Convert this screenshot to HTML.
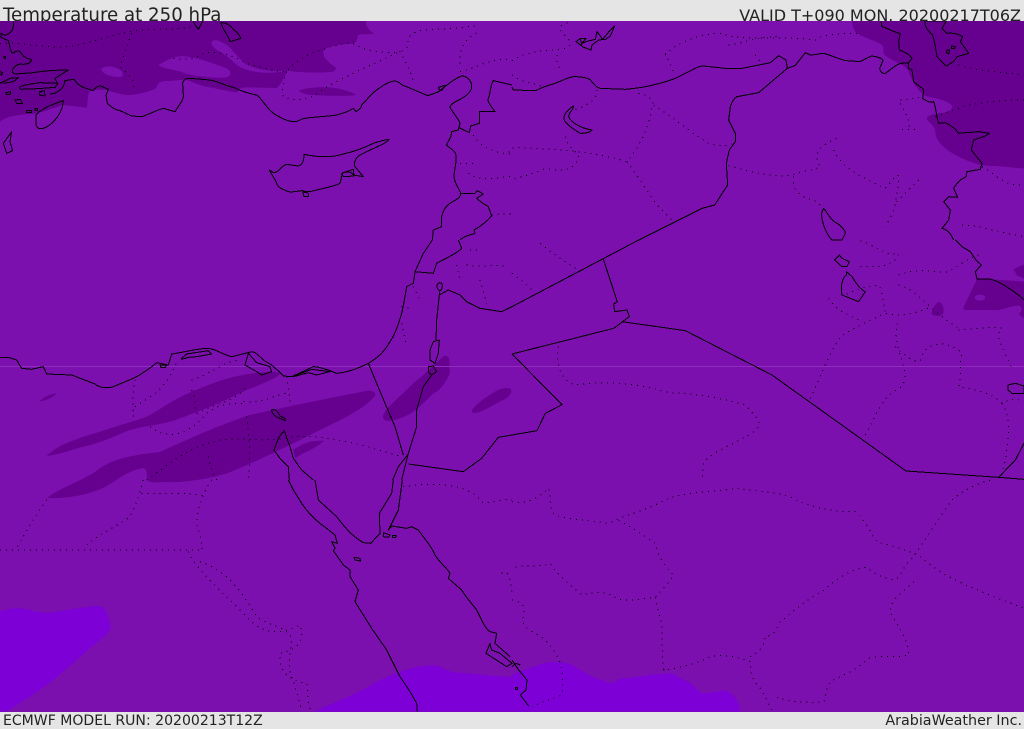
<!DOCTYPE html>
<html>
<head>
<meta charset="utf-8">
<title>Temperature at 250 hPa</title>
<style>
html,body{margin:0;padding:0;width:1024px;height:729px;overflow:hidden;background:#e5e5e5}
.t{position:absolute;font-family:"DejaVu Sans",sans-serif;color:#222;white-space:nowrap;line-height:1}
svg{position:absolute;left:0;top:21px}
.c path{fill:none;stroke:#000;stroke-width:1;vector-effect:non-scaling-stroke;stroke-linejoin:round;shape-rendering:crispEdges}
.d path{fill:none;stroke:#000;stroke-width:1;stroke-dasharray:1 5;vector-effect:non-scaling-stroke;shape-rendering:crispEdges}
</style>
</head>
<body>
<div class="t" style="left:3px;top:7px;font-size:18.2px">Temperature at 250 hPa</div>
<div class="t" style="right:3px;top:8px;font-size:16px">VALID T+090 MON. 20200217T06Z</div>
<div class="t" style="left:3px;top:714px;font-size:14.05px">ECMWF MODEL RUN: 20200213T12Z</div>
<div class="t" style="right:2px;top:714px;font-size:14.3px">ArabiaWeather Inc.</div>
<svg width="1024" height="691" viewBox="0 21 1024 691">
<rect x="0" y="21" width="1024" height="691" fill="#7b10ae"/>

<!-- dark and bright fills -->
<g fill="#65008f">
<g transform="scale(.33333)">
<path d="M0,63V365C20,350 40,345 110,340C150,330 170,320 190,315L260,323C265,300 262,285 268,275C290,268 305,268 320,270C350,280 370,285 390,285C430,280 465,270 470,262C472,250 480,243 500,243C520,243 545,238 560,240C590,250 605,258 620,260L710,278C715,270 720,262 735,262L830,264C845,250 855,230 862,212C900,218 960,220 1000,215L1010,205C990,190 968,175 970,155C975,140 1000,135 1060,130C1075,125 1070,110 1075,105C1090,100 1110,105 1122,100C1105,90 1095,75 1098,63Z"/>
</g>
<g transform="translate(512,0) scale(.33333)">
<path d="M1020,63C1022,80 1025,90 1035,100C1060,115 1100,125 1110,135C1118,145 1112,155 1115,160C1135,185 1180,190 1190,215C1200,240 1210,265 1240,288C1270,295 1310,300 1322,320C1318,335 1295,340 1280,340C1260,342 1240,350 1245,358C1255,372 1270,380 1270,395C1270,425 1300,450 1340,470C1370,485 1405,498 1440,498C1480,498 1510,505 1536,505V63Z"/>
</g>
<g transform="translate(512,240) scale(.33333)">
<path d="M1395,118H1440L1536,125V240L1505,232L1480,212L1440,210H1360L1353,205Z"/>
<path d="M1505,88C1520,80 1530,75 1536,75V115L1515,107Z"/>
<path d="M1258,222C1262,205 1272,185 1284,186C1296,195 1298,215 1290,225C1280,230 1265,228 1258,222Z"/>
</g>
<g transform="translate(0,240) scale(.33333)">
<path d="M140,648C170,620 200,605 300,575C360,555 400,545 440,530C480,510 520,475 600,445C650,425 700,405 780,398C810,395 830,395 842,400C830,415 790,430 740,450C680,480 620,505 540,535C490,555 440,555 390,570C340,590 300,610 250,620C200,635 170,645 140,648Z"/>
<path d="M118,484C130,472 150,462 170,460C160,470 140,482 118,484Z"/>
<path d="M880,628C900,620 915,605 945,603L972,602C960,615 930,632 905,642L885,655Z"/>
<path d="M1150,525C1160,500 1190,480 1240,430C1280,400 1310,365 1330,350C1340,345 1348,350 1348,365L1350,400C1340,420 1325,450 1300,460C1280,480 1260,500 1240,515C1210,535 1175,545 1160,542C1150,540 1148,532 1150,525Z"/>
<path d="M1415,512C1425,495 1460,470 1480,458C1500,445 1520,440 1532,447C1540,455 1525,475 1505,482C1480,495 1450,515 1425,519C1418,519 1415,517 1415,512Z"/>
</g>
<path d="M47,498C60,488 75,484 95,472C110,460 125,456 160,452C190,438 220,425 250,415C290,406 330,398 366,391C374,390 376,393 375,396C365,408 345,418 320,430C290,445 260,460 228,473C205,480 180,483 163,482C150,483 147,482 147,478C147,472 146,468 143,468C130,470 120,478 105,487C90,494 70,499 47,498Z"/>
</g>
<g fill="#7b10ae">
<g transform="scale(.33333)">
<path d="M303,208C315,195 340,197 358,208C372,218 372,228 362,231C340,232 310,225 303,208Z"/>
<path d="M475,195C500,182 520,168 550,168C590,172 640,190 680,205C695,215 695,225 680,232C650,236 600,230 560,222C530,208 490,208 475,195Z"/>
<path d="M635,125C645,115 660,122 680,135C700,150 710,170 735,190C760,208 810,215 862,212C850,215 820,220 790,218C750,215 720,205 705,190C690,175 670,160 650,150C640,142 632,132 635,125Z"/>
</g>
<g transform="translate(512,240) scale(.33333)">
<ellipse cx="1404" cy="173" rx="16" ry="9"/>
<path d="M1440,215C1470,210 1495,198 1520,197C1532,200 1532,212 1520,222L1536,235V250L1500,230C1480,225 1460,222 1440,215Z"/>
</g>
</g>
<g transform="scale(.33333)" fill="#65008f">
<path d="M897,272C920,262 960,260 1000,263C1030,268 1060,278 1068,285C1050,288 1000,288 960,286C930,286 905,282 897,272Z"/>
</g>
<g fill="#7d00d6">
<g transform="translate(0,480) scale(.33333)">
<path d="M0,395C20,388 40,384 65,385C90,388 110,398 140,398C180,395 240,382 290,378C310,378 318,388 320,400C325,415 333,428 332,445C325,462 310,472 290,488C250,520 200,570 140,615C100,645 50,675 20,695H0Z"/>
<path d="M945,695C990,670 1060,650 1125,608C1160,590 1190,580 1210,572C1240,562 1280,555 1310,556C1330,565 1345,575 1370,577C1420,580 1490,590 1536,590V695Z"/>
</g>
<g transform="translate(512,480) scale(.33333)">
<path d="M0,583C40,570 80,552 110,547C140,545 170,548 190,560C215,575 235,590 260,597C280,603 295,612 305,608C315,600 320,595 335,595C375,592 430,580 475,580C500,585 505,598 525,603C545,612 555,635 575,640C600,640 620,630 640,632C665,640 685,665 683,695H0Z"/>
</g>
</g>
<rect x="0" y="366" width="1024" height="1" fill="#8e2cbc"/>

<!-- dotted internal borders -->
<g class="d">
<g transform="scale(.33333)">
<path d="M0,130C60,125 120,145 200,140C280,130 340,100 420,90C470,85 510,92 580,80"/>
<path d="M395,100C380,140 370,170 360,200C385,225 410,240 400,275"/>
<path d="M520,175C560,180 590,175 610,160C640,150 700,165 740,190C790,205 830,215 860,215C890,175 940,150 1060,125"/>
<path d="M860,215C850,240 845,270 850,290C880,305 920,300 945,285C990,250 1080,210 1200,155C1250,140 1195,110 1260,92C1310,85 1350,90 1440,75"/>
<path d="M1060,130C1100,160 1180,160 1200,155C1220,190 1240,230 1240,250"/>
<path d="M1380,190C1375,150 1395,110 1440,95"/>
<path d="M1380,215C1420,210 1470,170 1536,180"/>
<path d="M1420,405C1440,440 1480,460 1536,462"/>
<path d="M1405,520C1440,545 1480,535 1536,528"/>
<path d="M1475,645C1500,640 1520,645 1536,640"/>
<path d="M1380,490H1420"/>
</g>
<g transform="translate(512,0) scale(.33333)">
<path d="M0,182C40,155 100,150 150,148C230,125 80,85 180,65"/>
<path d="M135,165C130,190 145,205 150,215"/>
<path d="M0,225C30,250 60,245 90,260"/>
<path d="M460,165C490,130 560,100 630,100C680,125 800,105 910,120C930,100 1000,100 1040,100"/>
<path d="M460,160C470,180 480,210 490,225"/>
<path d="M650,135C700,130 720,110 800,110"/>
<path d="M730,165L745,185"/>
<path d="M255,270C260,300 210,325 185,330"/>
<path d="M380,280C410,285 430,300 420,320C410,380 390,430 345,485C260,460 180,450 60,445C0,440 -10,440 -10,470"/>
<path d="M425,315C480,350 540,400 590,430C620,440 650,438 665,430"/>
<path d="M160,410C160,430 185,450 200,465C195,500 170,520 100,505C60,525 20,530 0,540"/>
<path d="M345,485C380,530 400,570 440,620L480,660"/>
<path d="M650,497C720,515 780,535 840,525C880,510 910,510 925,500C905,470 910,440 975,415"/>
<path d="M965,450C990,510 1070,540 1120,565C1160,520 1170,490 1150,610C1145,640 1130,660 1120,680"/>
<path d="M845,530C840,570 860,590 905,600L930,620"/>
<path d="M1220,540C1190,570 1170,590 1150,610"/>
<path d="M1165,300C1190,298 1220,295 1230,290M1165,310C1180,340 1195,360 1190,385M1170,388H1220"/>
<path d="M1270,350C1350,320 1400,300 1536,300"/>
<path d="M1340,195C1400,215 1470,215 1536,225"/>
<path d="M1410,500C1460,530 1480,560 1536,555"/>
<path d="M1350,675C1400,675 1470,700 1536,710"/>
</g>
<g transform="translate(0,240) scale(.33333)">
<path d="M400,530C400,490 395,440 410,410"/>
<path d="M405,500C450,470 500,450 530,365"/>
<path d="M575,450C590,480 585,510 590,520"/>
<path d="M575,420C640,400 690,350 720,365"/>
<path d="M860,410C865,440 870,470 870,495"/>
<path d="M730,485C790,490 840,460 860,460"/>
<path d="M590,520C640,490 700,490 740,440"/>
<path d="M450,560C500,600 560,590 620,520C650,500 660,490 740,490"/>
<path d="M440,720C500,680 560,620 660,600C720,590 800,610 880,590C1000,585 1100,620 1205,650"/>
<path d="M625,650C630,680 640,700 650,720"/>
<path d="M740,530C750,590 750,680 745,720"/>
<path d="M1240,140L1260,180M1205,200L1230,205M1205,250L1220,320"/>
<path d="M1370,75L1380,115M1400,75C1450,85 1480,70 1520,80M1440,120L1460,190M1410,30H1440"/>
</g>
<g transform="translate(0,480) scale(.33333)">
<path d="M140,60C110,100 80,150 50,205"/>
<path d="M430,0C420,40 410,70 390,110C350,140 300,160 260,195"/>
<path d="M425,40C480,42 560,35 610,48"/>
<path d="M635,0C605,40 590,100 590,130C600,170 610,190 605,220"/>
<path d="M0,210H605"/>
<path d="M565,215C590,270 660,330 730,400C780,460 830,470 900,435C915,470 900,510 840,520C835,570 860,600 920,610C925,640 920,670 935,695"/>
<path d="M600,245C680,270 730,340 770,410C810,440 870,440 875,480C870,530 860,570 880,600C890,640 900,670 905,695"/>
<path d="M1210,20C1280,10 1400,0 1450,70C1490,65 1520,55 1536,60"/>
<path d="M1505,280C1520,270 1530,280 1536,340"/>
</g>
<g transform="translate(512,240) scale(.33333)">
<path d="M140,320C130,360 140,420 190,435C260,425 370,425 470,458C560,460 650,480 700,495C740,540 760,550 720,580C650,620 590,640 575,670L570,720"/>
<path d="M895,475C930,400 950,340 990,285C1030,265 1070,240 1120,220C1160,230 1200,225 1260,200"/>
<path d="M1060,585C1100,510 1110,470 1170,440C1200,380 1140,340 1155,250"/>
<path d="M950,175C970,210 1010,225 1040,240"/>
<path d="M1150,320C1180,350 1220,375 1225,360C1240,300 1310,300 1350,340C1340,380 1350,420 1340,440C1400,450 1440,460 1470,490C1510,470 1520,480 1536,485"/>
<path d="M1340,270C1400,265 1440,260 1470,265C1440,290 1490,350 1500,390"/>
<path d="M1470,490C1500,540 1490,590 1480,660C1475,680 1470,700 1465,710"/>
<path d="M1120,215C1110,170 1110,150 1100,135C1050,140 1020,155 1000,165"/>
<path d="M1160,105C1220,80 1260,100 1310,95C1340,75 1380,50 1400,45"/>
<path d="M1160,135C1220,150 1250,210 1340,265"/>
<path d="M1045,80H1110C1130,70 1150,70 1160,40C1120,50 1100,20 1040,0"/>
<path d="M85,10C120,40 160,65 190,85M0,100C30,120 50,140 65,155"/>
</g>
<g transform="translate(512,480) scale(.33333)">
<path d="M0,65C40,75 80,55 110,25C120,60 110,90 130,105C170,120 230,120 290,130C340,105 400,90 440,70C510,30 590,40 670,25C740,35 820,35 860,65C900,75 930,95 1030,95C1070,130 1080,175 1100,188C1140,195 1190,215 1220,225C1290,295 1420,340 1536,385"/>
<path d="M320,120C370,150 410,175 430,190C440,240 470,270 485,285C470,310 440,340 430,352C390,355 360,365 320,358C290,340 270,330 210,345C170,310 140,290 115,250C80,265 40,250 0,265"/>
<path d="M430,352C435,390 450,420 450,450C450,480 450,530 455,570C500,565 560,550 600,528C640,525 680,530 715,545C715,580 720,600 745,625C760,650 775,680 780,695"/>
<path d="M715,530C750,510 760,490 760,468C790,470 795,440 805,425C850,390 880,360 930,335C970,300 1010,270 1060,262C1090,280 1120,300 1150,298C1170,290 1170,260 1200,235C1240,180 1290,100 1320,60C1360,25 1400,10 1436,0"/>
<path d="M455,570L470,575M1205,305C1170,340 1130,360 1135,400C1160,440 1190,480 1190,525C1150,535 1110,525 1070,535C1030,575 990,585 955,605C940,630 940,660 935,665C880,670 830,665 790,650"/>
<path d="M0,360C20,365 40,370 35,400C30,420 30,430 50,450C80,465 110,480 130,520C150,545 155,590 150,645C110,660 80,670 60,680"/>
</g>
</g>

<!-- coast lines and borders -->
<g class="c">
<g transform="scale(.33333)">
<path d="M40,63C42,85 38,95 20,105C10,108 3,97 3,100V112L25,122C30,135 30,155 38,160C45,155 55,150 60,155C70,165 70,175 95,178C92,190 80,195 60,192C45,196 35,205 38,218L45,222L100,218C135,212 170,210 205,210C190,220 175,228 165,235L172,250L120,248L70,256L58,262L62,268L115,266L165,262L175,250"/>
<path d="M150,282L165,280C175,272 190,270 195,242L222,238C230,250 240,258 250,262L280,272C285,262 295,258 303,258L325,268L318,285L322,310C335,322 345,330 360,332L395,348L425,350C450,342 470,330 490,325L525,335C540,310 552,300 550,285L548,250C550,238 558,235 568,235C600,238 620,238 640,242C665,250 680,258 700,262C720,272 750,282 770,285C785,295 800,325 820,340C840,352 860,365 885,365C895,365 905,355 915,355C945,350 980,350 1010,345C1030,340 1045,335 1060,325L1068,335C1075,330 1085,325 1085,315C1100,300 1115,280 1130,270C1150,255 1170,243 1185,243C1200,245 1205,258 1215,258L1283,287C1295,282 1310,280 1320,272C1340,255 1365,235 1385,228C1400,228 1412,240 1415,255C1417,270 1405,285 1380,298C1365,305 1350,315 1350,322C1360,340 1375,355 1380,370L1375,390L1355,395C1355,415 1345,420 1340,435C1348,445 1365,450 1368,465C1372,480 1362,510 1362,530C1365,555 1378,565 1382,580C1382,595 1365,600 1350,610C1335,620 1328,635 1325,650L1325,680L1300,690L1297,720"/>
<path d="M1380,720C1395,705 1415,705 1425,700L1422,690C1440,680 1460,665 1475,648L1465,620C1450,610 1440,605 1430,595L1450,582L1432,572L1425,580H1382"/>
<path d="M1375,382L1408,398L1412,378L1438,370V335H1485C1475,320 1460,305 1465,295C1472,280 1470,255 1480,242L1536,255"/>
<path d="M108,345C120,330 150,315 190,302C188,330 175,350 160,365C140,385 115,395 108,375Z"/>
<path d="M0,250L30,235L55,233L40,245L10,250M80,332H95V338H80ZM18,278L32,275L30,284H20ZM45,300L60,298L68,310L50,310ZM120,275L133,272L135,288L118,285ZM0,215L8,218L5,225L0,222M105,325H112V332H105ZM12,170H17V175H12Z"/>
<path d="M35,395L30,425L38,452L20,460L10,430Z"/>
<path d="M580,63C585,75 592,85 596,87L608,63M663,68C680,68 690,75 702,90C710,95 718,105 723,115L690,125C685,105 665,85 663,68Z"/>
<path d="M808,510L820,518C835,520 845,495 860,493L895,498C908,495 912,480 912,463C945,470 990,475 1030,462C1060,455 1090,445 1120,430C1135,425 1150,420 1167,418C1160,430 1130,440 1090,460C1065,470 1060,490 1065,500L1090,530L1060,525C1055,515 1045,515 1028,518L1020,550C1000,560 970,565 950,570C930,575 920,578 908,572C895,572 880,578 865,575C850,568 835,565 830,550C825,535 815,525 808,510Z"/>
<path d="M1025,520L1060,508L1062,528L1030,530ZM908,575L925,580V590H912Z"/>
<path d="M1315,262L1335,256L1325,272L1318,268Z"/>
</g>
<g transform="translate(512,0) scale(.33333)">
<path d="M0,262L4,270L70,272C85,265 100,258 120,253C140,248 165,232 185,230C205,230 225,232 235,240C245,250 250,262 265,265L340,268C370,265 410,260 430,253C450,250 475,240 490,235L530,215C550,205 560,198 575,198L640,205H690L775,188L800,167L822,180L826,205L850,196L880,158L895,165C910,165 925,160 935,160C955,165 975,175 1000,182C1015,182 1030,185 1045,184C1060,178 1070,170 1080,168C1090,170 1110,172 1113,182L1103,205C1105,215 1110,222 1120,220C1135,210 1155,190 1170,190L1190,188L1190,205L1200,210L1205,245C1215,255 1228,260 1235,270L1232,295C1240,300 1250,310 1265,305C1272,320 1272,345 1280,370L1300,368C1315,375 1330,385 1340,400L1400,395L1432,400C1425,410 1395,415 1385,420L1378,450L1410,490L1405,508L1365,515L1362,530L1345,540C1335,550 1330,555 1325,565L1337,592L1310,590L1295,605L1315,630L1310,660L1290,685C1310,690 1318,705 1325,720"/>
<path d="M1107,63L1110,80C1130,85 1150,100 1165,100L1160,125L1162,150C1175,155 1195,165 1200,175L1190,188"/>
<path d="M1238,63C1238,75 1240,85 1262,105C1268,125 1272,150 1275,170C1285,180 1295,195 1305,198C1315,188 1325,190 1335,170L1370,160L1345,125L1352,110C1335,100 1320,98 1305,100L1290,85L1303,63Z"/>
<path d="M1305,150L1313,150L1310,162L1303,158ZM1318,138L1330,140L1328,146L1318,145Z"/>
<path d="M826,205L740,278L675,290C665,295 660,305 655,320L650,360L670,400V425L652,450L643,490L647,555L608,615L570,625L380,720"/>
<path d="M205,115L222,115L210,130L222,125L250,118L255,95L272,118L295,90L308,78L295,108L280,118L260,120L240,135L237,150L215,142L192,125ZM205,115L210,140"/>
<path d="M184,318C186,330 170,335 170,350C175,365 205,385 240,390C232,400 215,400 205,400C180,385 150,365 156,350C160,335 175,325 184,318Z"/>
<path d="M935,625C948,640 955,660 975,670C985,675 1000,690 1000,700L990,720H960C940,700 925,655 930,635Z"/>
</g>
<g transform="translate(0,240) scale(.33333)">
<path d="M1297,0L1270,40L1245,95L1240,130L1220,140C1215,170 1210,200 1205,220C1195,255 1185,285 1170,305C1150,340 1130,355 1105,370C1075,385 1040,398 1010,400L990,392C970,385 955,380 940,380L875,410L850,408C840,395 825,385 815,375L790,360C775,345 765,335 755,335L695,350C670,345 650,328 625,325C590,325 550,338 515,342L505,375L470,368C450,385 430,400 400,415L340,440C325,445 300,445 285,432L215,405L140,402L130,380L95,388L65,385L50,360L25,352H0"/>
<path d="M1245,95L1300,100L1310,70C1335,55 1365,45 1385,25L1375,0"/>
<path d="M545,355L560,342L625,332L635,342L590,350L565,352L545,358ZM480,375L500,375L495,383L483,382Z"/>
<path d="M735,375L745,340L770,368L810,380L815,395L785,405L770,395L735,375Z"/>
<path d="M875,410L935,388L990,395L950,405L925,398L880,410Z"/>
<path d="M1318,165L1345,150L1380,165L1400,185L1440,205L1505,215L1536,200"/>
<path d="M1318,128C1328,128 1330,140 1322,152C1312,152 1305,135 1318,128ZM1318,155L1318,165L1310,240L1308,300"/>
<path d="M1300,305L1318,300L1315,340L1305,370L1290,360L1290,330ZM1285,380L1300,378L1310,395L1295,405L1285,395Z"/>
<path d="M1295,405L1270,440L1250,510V560L1225,640L1205,720"/>
<path d="M1105,370L1155,490L1185,560L1210,645"/>
<path d="M1225,642L1195,680L1178,720M1225,672L1390,695L1445,655L1495,592L1536,585"/>
<path d="M815,510C825,505 835,515 840,528L855,535L856,542L840,535C825,530 815,520 815,510Z"/>
<path d="M855,572L845,580L835,595L822,630L840,655L865,680L868,720"/>
<path d="M852,570L870,620L880,655L905,690L940,720"/>
</g>
<g transform="translate(0,480) scale(.33333)">
<path d="M865,0L880,30L905,70C925,100 950,125 980,145L1005,165L1012,190L995,185L1005,205L1000,212L1030,255L1050,270L1050,290L1075,330L1065,365L1115,445L1160,510L1200,590L1230,635L1250,670L1252,695"/>
<path d="M945,0L955,60L1010,110C1040,150 1060,170 1090,188L1112,190L1140,160L1138,100L1175,40L1180,0"/>
<path d="M1207,0L1195,90L1165,150L1175,138L1220,145L1235,140L1255,150C1280,185 1295,200 1305,225C1320,250 1340,262 1350,280L1345,295L1385,330C1400,355 1415,370 1430,390C1445,420 1455,445 1470,455L1490,460L1485,490L1530,530"/>
<path d="M1150,158L1170,165L1165,172L1150,170ZM1178,166H1188V172H1178ZM1062,232L1080,235L1082,243L1065,240Z"/>
<path d="M1470,490L1458,520L1520,560L1536,550L1500,520L1475,510Z"/>
</g>
<g transform="translate(512,480) scale(.33333)">
<path d="M0,540L20,570L45,600L42,630L25,645L50,678"/>
<path d="M10,622H16V628H10Z"/>
<path d="M0,560L12,550L25,555"/>
</g>
<g transform="translate(512,240) scale(.33333)">
<path d="M0,200L380,0"/>
<path d="M273,55L316,185L305,192L308,215L345,210L352,230L305,265L0,342"/>
<path d="M330,245L520,272L780,405L1182,693L1460,712L1536,718"/>
<path d="M1460,712L1510,660L1536,610"/>
<path d="M0,585L75,572L100,520L150,494L0,342"/>
<path d="M968,60L982,45L990,55L1012,65L1005,80L990,80Z"/>
<path d="M1003,95V105C990,115 985,140 990,165L1040,185L1060,155C1040,145 1030,125 1020,110Z"/>
<path d="M1330,0L1350,20L1375,35L1392,60L1408,75L1390,95L1395,117H1435C1465,125 1510,155 1536,180"/>
<path d="M1488,435L1510,430L1536,438V460L1500,460L1488,450Z"/>
</g>
</g>
</svg>
</body>
</html>
